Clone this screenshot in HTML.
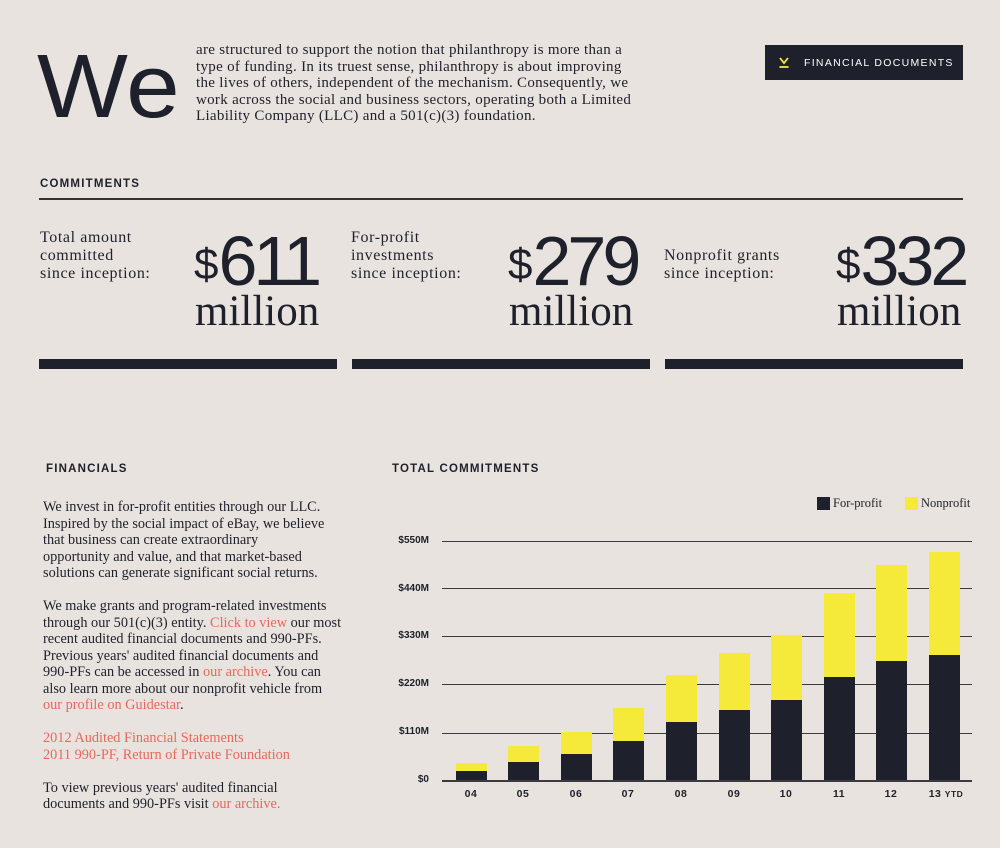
<!DOCTYPE html>
<html><head><meta charset="utf-8"><style>
*{margin:0;padding:0;box-sizing:border-box}
body{width:1000px;height:848px;background:#e8e3df;color:#1e202b;position:relative;overflow:hidden;font-family:"Liberation Serif","DejaVu Serif",serif}
.a{position:absolute;white-space:nowrap}
.sans{font-family:"Liberation Sans",sans-serif}
.h{font-family:"Liberation Sans",sans-serif;font-weight:bold;font-size:11.5px;letter-spacing:1.2px}
.p{font-size:14.3px;line-height:16.5px}
.p1{font-size:15px;line-height:16.6px;letter-spacing:.3px}
.r{color:#e8685c}
.lab{font-size:16px;line-height:18px;letter-spacing:.6px}
.num{font-family:"Liberation Sans",sans-serif;font-size:70px;line-height:74px;letter-spacing:-4px}
.num span{font-size:44px;vertical-align:6px;letter-spacing:0}
.mil{font-size:43px;line-height:44px}
.bar{position:absolute;height:10px;background:#1e202b;top:359px}
.gl{position:absolute;left:442px;width:530px;height:1px;background:#3a3a40}
.yl{position:absolute;font-family:"Liberation Sans",sans-serif;font-weight:bold;font-size:10px;right:571px}
.xl{position:absolute;font-family:"Liberation Sans",sans-serif;font-weight:bold;font-size:10.5px;top:788px;width:40px;text-align:center;letter-spacing:.5px}
.b{position:absolute;width:31px}
</style></head><body>
<div class="a sans" style="left:37px;top:37px;font-size:90px;line-height:100px;transform:scaleX(1.07);transform-origin:0 0">We</div>
<div class="a p1" style="left:196px;top:42px">are structured to support the notion that philanthropy is more than a<br>type of funding. In its truest sense, philanthropy is about improving<br>the lives of others, independent of the mechanism. Consequently, we<br>work across the social and business sectors, operating both a Limited<br>Liability Company (LLC) and a 501(c)(3) foundation.</div>
<div class="a" style="left:765px;top:45px;width:198px;height:35px;background:#1e202b"></div>
<svg class="a" style="left:778px;top:56px" width="14" height="14" viewBox="0 0 14 14"><path d="M2 2 L6 7 L10 2" fill="none" stroke="#f5e93a" stroke-width="1.8"/><path d="M1.5 11 H10.5" stroke="#f5e93a" stroke-width="1.8"/></svg>
<div class="a h" style="left:804px;top:57px;color:#fff;font-size:10.5px;font-weight:normal;letter-spacing:1.3px">FINANCIAL DOCUMENTS</div>

<div class="a h" style="left:40px;top:178px">COMMITMENTS</div>
<div class="a" style="left:39px;top:198px;width:924px;height:2px;background:#333"></div>

<div class="a lab" style="left:40px;top:229px">Total amount<br>committed<br>since inception:</div>
<div class="a num" style="left:194px;top:224px"><span>$</span>611</div>
<div class="a mil" style="left:195px;top:290px">million</div>
<div class="a lab" style="left:351px;top:229px">For-profit<br>investments<br>since inception:</div>
<div class="a num" style="left:508px;top:224px"><span>$</span>279</div>
<div class="a mil" style="left:509px;top:290px">million</div>
<div class="a lab" style="left:664px;top:247px">Nonprofit grants<br>since inception:</div>
<div class="a num" style="left:836px;top:224px"><span>$</span>332</div>
<div class="a mil" style="left:837px;top:290px">million</div>
<div class="bar" style="left:39px;width:298px"></div>
<div class="bar" style="left:352px;width:298px"></div>
<div class="bar" style="left:665px;width:298px"></div>

<div class="a h" style="left:46px;top:463px">FINANCIALS</div>
<div class="a p" style="left:43px;top:499px">We invest in for-profit entities through our LLC.<br>Inspired by the social impact of eBay, we believe<br>that business can create extraordinary<br>opportunity and value, and that market-based<br>solutions can generate significant social returns.<br><br>We make grants and program-related investments<br>through our 501(c)(3) entity. <span class="r">Click to view</span> our most<br>recent audited financial documents and 990-PFs.<br>Previous years' audited financial documents and<br>990-PFs can be accessed in <span class="r">our archive</span>. You can<br>also learn more about our nonprofit vehicle from<br><span class="r">our profile on Guidestar</span>.<br><br><span class="r">2012 Audited Financial Statements<br>2011 990-PF, Return of Private Foundation</span><br><br>To view previous years' audited financial<br>documents and 990-PFs visit <span class="r">our archive.</span></div>

<div class="a h" style="left:392px;top:463px">TOTAL COMMITMENTS</div>
<div class="a" style="left:817px;top:497px;width:13px;height:13px;background:#1e202b"></div>
<div class="a" style="left:833px;top:496px;font-size:12.5px">For-profit</div>
<div class="a" style="left:905px;top:497px;width:13px;height:13px;background:#f5e93a"></div>
<div class="a" style="left:921px;top:496px;font-size:12.5px">Nonprofit</div>

<div class="gl" style="top:541px"></div><div class="yl" style="top:535px">$550M</div>
<div class="gl" style="top:588px"></div><div class="yl" style="top:583px">$440M</div>
<div class="gl" style="top:636px"></div><div class="yl" style="top:630px">$330M</div>
<div class="gl" style="top:684px"></div><div class="yl" style="top:678px">$220M</div>
<div class="gl" style="top:733px"></div><div class="yl" style="top:726px">$110M</div>
<div class="gl" style="top:780px;height:2px"></div><div class="yl" style="top:774px">$0</div>

<div class="b" style="left:456px;top:763px;height:8px;background:#f5e93a"></div><div class="b" style="left:456px;top:771px;height:9px;background:#1e202b"></div>
<div class="b" style="left:508px;top:746px;height:16px;background:#f5e93a"></div><div class="b" style="left:508px;top:762px;height:18px;background:#1e202b"></div>
<div class="b" style="left:561px;top:732px;height:22px;background:#f5e93a"></div><div class="b" style="left:561px;top:754px;height:26px;background:#1e202b"></div>
<div class="b" style="left:613px;top:708px;height:33px;background:#f5e93a"></div><div class="b" style="left:613px;top:741px;height:39px;background:#1e202b"></div>
<div class="b" style="left:666px;top:675px;height:47px;background:#f5e93a"></div><div class="b" style="left:666px;top:722px;height:58px;background:#1e202b"></div>
<div class="b" style="left:719px;top:653px;height:57px;background:#f5e93a"></div><div class="b" style="left:719px;top:710px;height:70px;background:#1e202b"></div>
<div class="b" style="left:771px;top:635px;height:65px;background:#f5e93a"></div><div class="b" style="left:771px;top:700px;height:80px;background:#1e202b"></div>
<div class="b" style="left:824px;top:593px;height:84px;background:#f5e93a"></div><div class="b" style="left:824px;top:677px;height:103px;background:#1e202b"></div>
<div class="b" style="left:876px;top:565px;height:96px;background:#f5e93a"></div><div class="b" style="left:876px;top:661px;height:119px;background:#1e202b"></div>
<div class="b" style="left:929px;top:552px;height:103px;background:#f5e93a"></div><div class="b" style="left:929px;top:655px;height:125px;background:#1e202b"></div>

<div class="xl" style="left:451px">04</div>
<div class="xl" style="left:503px">05</div>
<div class="xl" style="left:556px">06</div>
<div class="xl" style="left:608px">07</div>
<div class="xl" style="left:661px">08</div>
<div class="xl" style="left:714px">09</div>
<div class="xl" style="left:766px">10</div>
<div class="xl" style="left:819px">11</div>
<div class="xl" style="left:871px">12</div>
<div class="xl" style="left:916px;width:60px">13 <span style="font-size:8.5px">YTD</span></div>
</body></html>
